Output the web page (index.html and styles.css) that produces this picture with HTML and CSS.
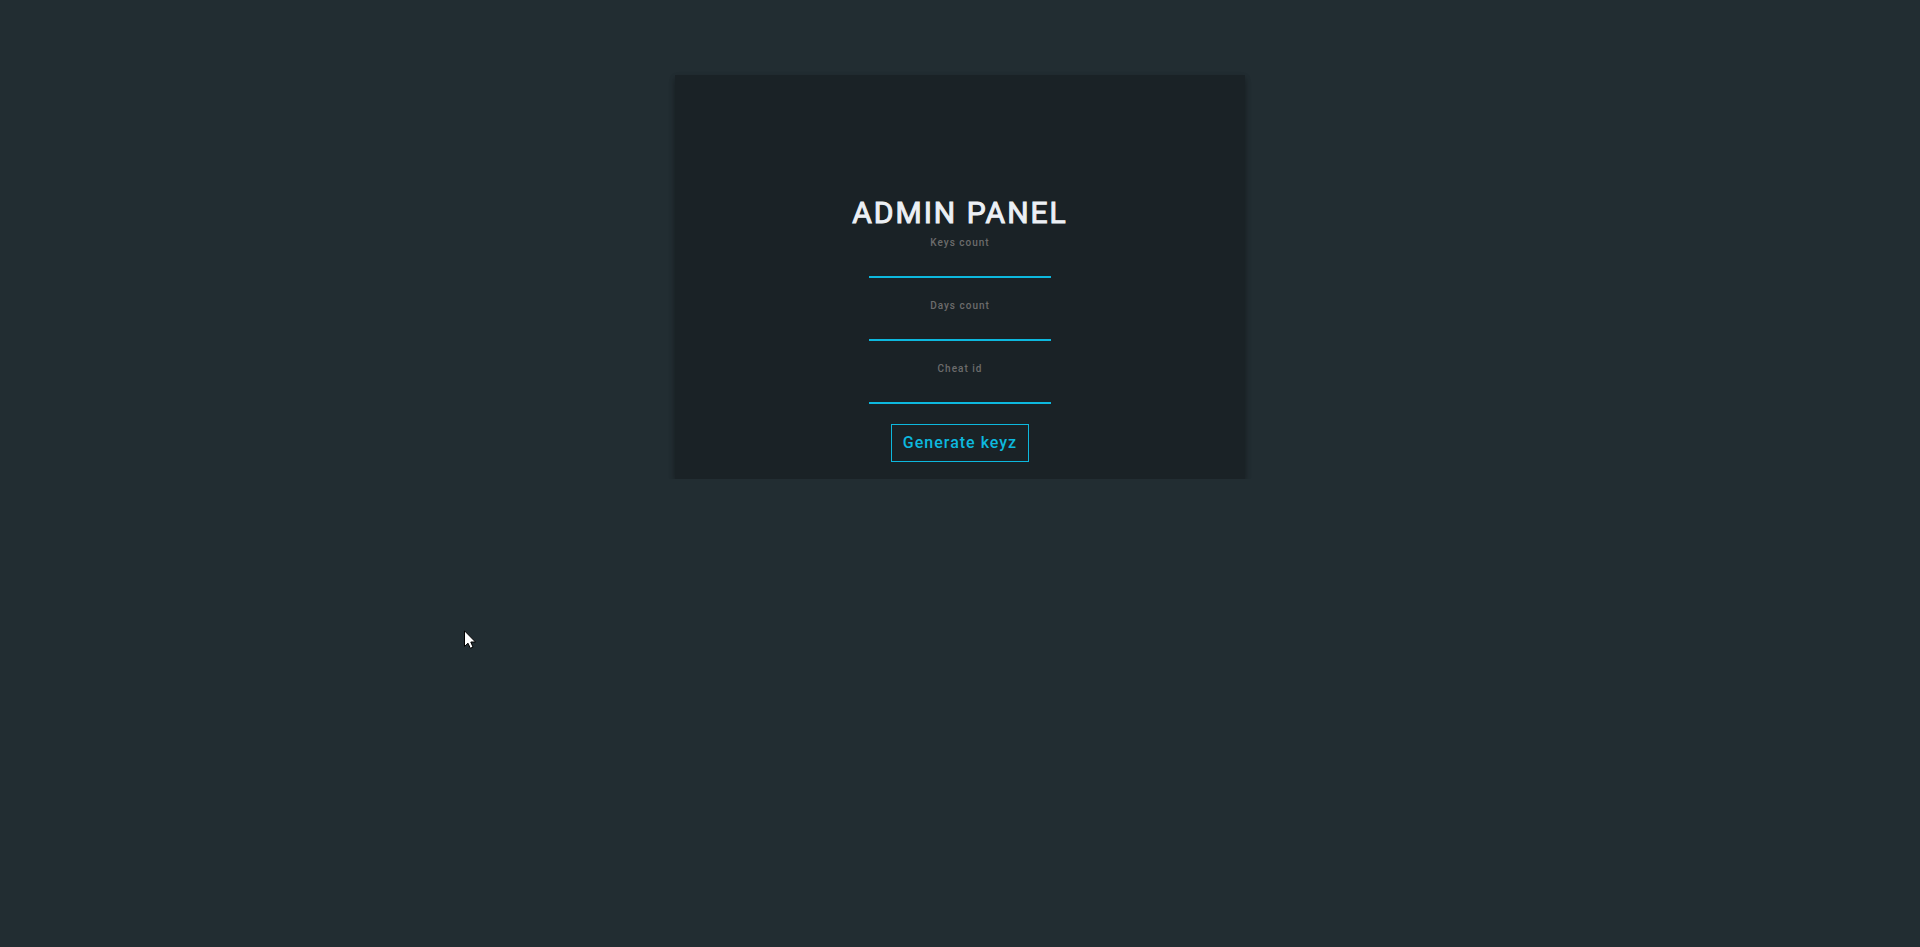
FILE: index.html
```
<!DOCTYPE html>
<html lang="en">
  <head>
    <title>Admin panel</title>
    <meta charset="UTF-8" />
    <link rel="stylesheet" href="styles.css">
  </head>

  <body>
    <div class="login-box">
        <h1 class="login-title">ADMIN PANEL</h1>
        <form class="login-form">
            <div class="form-group">
                <label for="keys">Keys count</label>
                <input type="text" id="keys" name="keys">
            </div>
            <div class="form-group">
                <label for="days">Days count</label>
                <input type="text" id="days" name="days">
            </div>
            <div class="form-group">
                <label for="cheat">Cheat id</label>
                <input type="text" id="cheat" name="cheat">
            </div>
            <button type="button" class="btn">Generate keyz</button>
        </form>
    </div>
    <svg class="cursor" width="12" height="19" viewBox="0 0 12 19" aria-hidden="true">
        <path d="M0.5 0.8V16.5L4 13.2L6.3 18.3L9 17.1L6.8 12H11.5Z" fill="#fff" stroke="#000" stroke-width="1"/>
    </svg>
  </body>
</html>
```

FILE: styles.css
```
*{
    box-sizing: border-box;
}
body{
    margin: 0;
    padding: 75px 15px 0;
    background: #222d32;
    font-family: Roboto, sans-serif;
}
.login-box{
    max-width: 570px;
    margin: 0 auto;
    padding: 118px 15px 17px;
    background: #1a2226;
    text-align: center;
    box-shadow: 0 3px 6px rgba(0, 0, 0, 0.16), 0 3px 6px rgba(0, 0, 0, 0.23);
}
.login-title{
    margin: 0 0 2px;
    font-size: 30px;
    line-height: 40px;
    font-weight: 400;
    -webkit-text-stroke: 1px;
    letter-spacing: 2px;
    color: #ecf0f5;
}
.login-form{
    display: flex;
    flex-direction: column;
    align-items: center;
    gap: 20px;
}
.form-group{
    display: flex;
    flex-direction: column;
    align-items: center;
}
label{
    font-size: 10px;
    line-height: 16px;
    font-weight: 500;
    letter-spacing: 1px;
    color: #6c6c6c;
}
input{
    width: 182px;
    height: 27px;
    padding: 0;
    border: 0;
    border-bottom: 2px solid #0db8de;
    outline: 0;
    background: transparent;
    color: #ecf0f5;
    font-family: inherit;
    font-size: 14px;
    text-align: center;
}
.btn{
    height: 38px;
    padding: 0 11px 1px;
    border: 1px solid #0db8de;
    background: transparent;
    color: #0db8de;
    font-family: inherit;
    font-size: 16px;
    font-weight: 500;
    letter-spacing: 1px;
    cursor: pointer;
}
.btn:hover{
    background: #0db8de;
    color: #1a2226;
}
/* pointer drawn over the page */
.cursor{
    position: absolute;
    left: 464px;
    top: 630px;
    pointer-events: none;
}
```
